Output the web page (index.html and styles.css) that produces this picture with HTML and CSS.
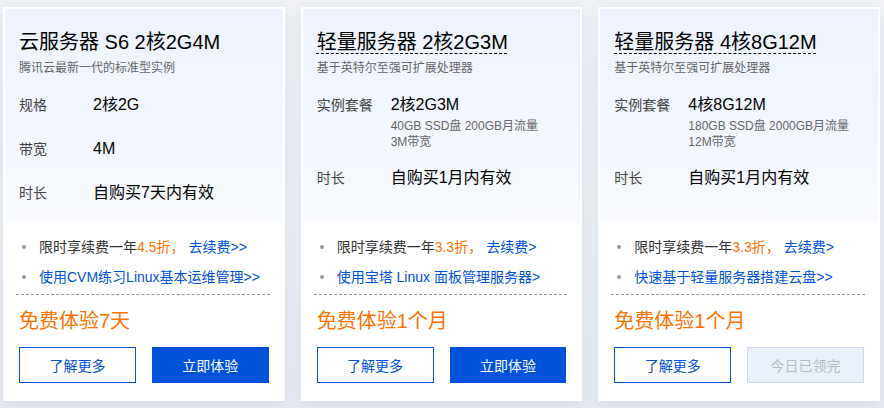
FILE: index.html
```html
<!DOCTYPE html>
<html lang="zh-CN">
<head>
    <meta charset="UTF-8">
    <meta name="viewport" content="width=device-width, initial-scale=1.0">
    <title>免费体验</title>
    <link rel="stylesheet" href="styles.css">
</head>
<body>
    <div class="cards">
        <!-- 云服务器 -->
        <div class="card">
            <div class="card-top">
                <h3 class="card-title">云服务器 S6 2核2G4M</h3>
                <p class="card-desc">腾讯云最新一代的标准型实例</p>
                <div class="specs">
                    <div class="spec"><span class="spec-label">规格</span><div class="spec-value">2核2G</div></div>
                    <div class="spec"><span class="spec-label">带宽</span><div class="spec-value">4M</div></div>
                    <div class="spec"><span class="spec-label">时长</span><div class="spec-value">自购买7天内有效</div></div>
                </div>
            </div>
            <div class="card-bottom">
                <ul class="tips">
                    <li>限时享续费一年<span class="hot">4.5折，</span><a class="link go" href="#">去续费&gt;&gt;</a></li>
                    <li><a class="link" href="#">使用CVM练习Linux基本运维管理&gt;&gt;</a></li>
                </ul>
                <div class="free">免费体验7天</div>
                <div class="btns">
                    <button class="btn btn-outline">了解更多</button>
                    <button class="btn btn-primary">立即体验</button>
                </div>
            </div>
        </div>

        <!-- 轻量 2核2G3M -->
        <div class="card">
            <div class="card-top">
                <h3 class="card-title"><span class="dashed">轻量服务器 2核2G3M</span></h3>
                <p class="card-desc">基于英特尔至强可扩展处理器</p>
                <div class="specs">
                    <div class="spec">
                        <span class="spec-label">实例套餐</span>
                        <div class="spec-value">2核2G3M
                            <div class="spec-sub">40GB SSD盘 200GB月流量<br>3M带宽</div>
                        </div>
                    </div>
                    <div class="spec"><span class="spec-label">时长</span><div class="spec-value">自购买1月内有效</div></div>
                </div>
            </div>
            <div class="card-bottom">
                <ul class="tips">
                    <li>限时享续费一年<span class="hot">3.3折，</span><a class="link go" href="#">去续费&gt;</a></li>
                    <li><a class="link" href="#">使用宝塔 Linux 面板管理服务器&gt;</a></li>
                </ul>
                <div class="free">免费体验1个月</div>
                <div class="btns">
                    <button class="btn btn-outline">了解更多</button>
                    <button class="btn btn-primary">立即体验</button>
                </div>
            </div>
        </div>

        <!-- 轻量 4核8G12M -->
        <div class="card">
            <div class="card-top">
                <h3 class="card-title"><span class="dashed">轻量服务器 4核8G12M</span></h3>
                <p class="card-desc">基于英特尔至强可扩展处理器</p>
                <div class="specs">
                    <div class="spec">
                        <span class="spec-label">实例套餐</span>
                        <div class="spec-value">4核8G12M
                            <div class="spec-sub">180GB SSD盘 2000GB月流量<br>12M带宽</div>
                        </div>
                    </div>
                    <div class="spec"><span class="spec-label">时长</span><div class="spec-value">自购买1月内有效</div></div>
                </div>
            </div>
            <div class="card-bottom">
                <ul class="tips">
                    <li>限时享续费一年<span class="hot">3.3折，</span><a class="link go" href="#">去续费&gt;</a></li>
                    <li><a class="link" href="#">快速基于轻量服务器搭建云盘&gt;&gt;</a></li>
                </ul>
                <div class="free">免费体验1个月</div>
                <div class="btns">
                    <button class="btn btn-outline">了解更多</button>
                    <button class="btn btn-disabled" disabled>今日已领完</button>
                </div>
            </div>
        </div>
    </div>
</body>
</html>
```

FILE: styles.css
```css
* {
    margin: 0;
    padding: 0;
    box-sizing: border-box;
}

body {
    font-family: "Liberation Sans", "Noto Sans CJK SC", sans-serif;
    background: linear-gradient(#f0f2f5, #e8ecf3);
    color: #000;
    height: 408px;
    overflow: hidden;
}

.cards {
    display: flex;
    gap: 16px;
    padding: 7px 4px 7px 3px;
}

.card {
    flex: 1;
    height: 394px;
    background-color: #fff;
    padding: 2px;
    box-shadow: 0 4px 14px rgba(60, 90, 150, 0.1);
}

.card-top {
    height: 214px;
    padding: 19px 14px 0;
    background: linear-gradient(#edf2fc, #f8faff);
}

.card-title {
    font-size: 20px;
    font-weight: normal;
    line-height: 28px;
    color: #000;
}

.dashed {
    text-decoration: underline dashed #000 1px;
    text-underline-offset: 4px;
}

.card-desc {
    margin-top: 3px;
    font-size: 12px;
    line-height: 18px;
    color: #666;
}

.specs {
    margin-top: 16px;
    display: flex;
    flex-direction: column;
    gap: 20px;
}

.spec {
    display: flex;
}

.spec-label {
    width: 74px;
    flex-shrink: 0;
    font-size: 14px;
    line-height: 24px;
    color: #444;
}

.spec-value {
    font-size: 16px;
    line-height: 24px;
    color: #000;
}

.spec-sub {
    margin: 1px 0 -4px;
    font-size: 12px;
    line-height: 16px;
    color: #666;
}

.card-bottom {
    padding: 13px 14px 0;
}

.tips {
    list-style: none;
    padding-bottom: 6px;
    margin: 0 -1px 0 -3px;
    border-bottom: 1px dashed #999;
}

.tips li {
    position: relative;
    padding-left: 23px;
    font-size: 14px;
    line-height: 22px;
    color: #333;
}

.tips li + li {
    margin-top: 8px;
}

.tips li::before {
    content: "";
    position: absolute;
    left: 6px;
    top: 9px;
    width: 4px;
    height: 4px;
    border-radius: 50%;
    background-color: #999;
}

.hot {
    color: #ff7200;
}

.link {
    color: #0052d9;
    text-decoration: none;
}

.go {
    margin-left: 4px;
}

.free {
    margin-top: 12px;
    font-size: 20px;
    line-height: 28px;
    color: #ff7200;
}

.btns {
    margin-top: 12px;
    display: grid;
    grid-template-columns: 1fr 1fr;
    gap: 16px;
}

.btn {
    height: 36px;
    font-family: inherit;
    font-size: 14px;
    border: 1px solid #0052d9;
    background-color: #fff;
    color: #0052d9;
    cursor: pointer;
}

.btn-primary {
    background-color: #0052d9;
    color: #fff;
}

.btn-disabled {
    background-color: #eaf0fb;
    border-color: #cfd8e8;
    color: #b3bccc;
    cursor: not-allowed;
}
```
